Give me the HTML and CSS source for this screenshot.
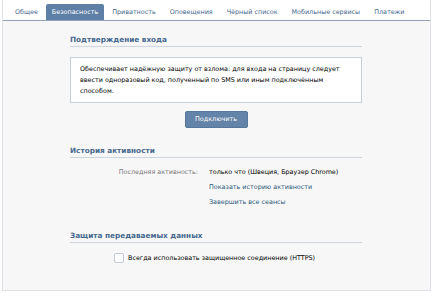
FILE: index.html
```html
<!DOCTYPE html>
<html lang="ru">
<head>
<meta charset="utf-8">
<title>Безопасность</title>
<link rel="stylesheet" href="styles.css">
</head>
<body>
<div class="page">
  <nav class="tabs">
    <a class="tab">Общее</a>
    <a class="tab tab-active">Безопасность</a>
    <a class="tab">Приватность</a>
    <a class="tab">Оповещения</a>
    <a class="tab">Чёрный список</a>
    <a class="tab">Мобильные сервисы</a>
    <a class="tab">Платежи</a>
  </nav>
  <main class="content">
    <section class="sec sec-login">
      <h2 class="sec-title">Подтверждение входа</h2>
      <div class="notice">Обеспечивает надёжную защиту от взлома: для входа на страницу следует<br>ввести одноразовый код, полученный по SMS или иным подключённым<br>способом.</div>
      <div class="btn-row"><button class="btn">Подключить</button></div>
    </section>
    <section class="sec sec-history">
      <h2 class="sec-title">История активности</h2>
      <div class="info">
        <div class="info-label">Последняя активность:</div>
        <div class="info-value">только что (Швеция, Браузер Chrome)</div>
        <div></div>
        <a class="info-link">Показать историю активности</a>
        <div></div>
        <a class="info-link">Завершить все сеансы</a>
      </div>
    </section>
    <section class="sec sec-https">
      <h2 class="sec-title">Защита передаваемых данных</h2>
      <label class="check-row"><span class="checkbox"></span><span class="check-label">Всегда использовать защищенное соединение (HTTPS)</span></label>
    </section>
  </main>
</div>
</body>
</html>
```

FILE: styles.css
```css
* { box-sizing: border-box; }
html, body { margin: 0; padding: 0; background: #fff; }
body {
  font-family: "DejaVu Sans", sans-serif;
  font-size: 6.4px;
  color: #000;
}
.page {
  margin-left: 2px;
  width: 429px;
  height: 291px;
  border: 1px solid #dde2e8;
  border-top: none;
  background: #f7f7f7;
  display: flex;
  flex-direction: column;
}
.tabs {
  height: 21px;
  background: #fff;
  border-bottom: 1px solid #8ea3b9;
  display: flex;
  align-items: flex-end;
  padding-left: 6px;
}
.tab {
  height: 16px;
  line-height: 17px;
  padding: 0 6px;
  margin-right: 2px;
  color: #45688e;
  white-space: nowrap;
}
.tab-active {
  background: #5f80a6;
  color: #fff;
  border-radius: 2px 2px 0 0;
}
.content {
  flex: 1;
  padding: 0 0 0 67px;
}
.sec { width: 292px; }
.sec-title {
  margin: 0;
  font-size: 7.3px;
  font-weight: bold;
  line-height: 12px;
  color: #45688e;
  border-bottom: 1px solid #cdd6e0;
}
.sec-login { padding-top: 13px; }
.notice {
  margin-top: 10px;
  height: 46px;
  background: #fff;
  border: 1px solid #c8d2dd;
  padding: 6px 9px;
  line-height: 11px;
  white-space: nowrap;
  color: #000;
}
.btn-row {
  display: flex;
  justify-content: center;
  margin-top: 8px;
}
.btn {
  width: 63px;
  height: 17px;
  padding: 0;
  border: 1px solid #56779c;
  border-radius: 2px;
  background: #6383a8;
  color: #fff;
  font-family: inherit;
  font-size: 6.4px;
  line-height: 15px;
}
.sec-history { margin-top: 17px; }
.info {
  margin-top: 7px;
  display: grid;
  grid-template-columns: 128px 1fr;
  column-gap: 11px;
  line-height: 15px;
}
.info-label { text-align: right; color: #777; }
.info-link { color: #2b587a; }
.sec-https { margin-top: 20px; }
.check-row {
  display: flex;
  align-items: center;
  margin-top: 8px;
  padding-left: 44px;
  height: 14px;
}
.checkbox {
  width: 10px;
  height: 10px;
  background: #fff;
  border: 1px solid #c3ccd6;
  border-radius: 2px;
  margin-right: 4px;
}
.check-label { color: #000; }
```
